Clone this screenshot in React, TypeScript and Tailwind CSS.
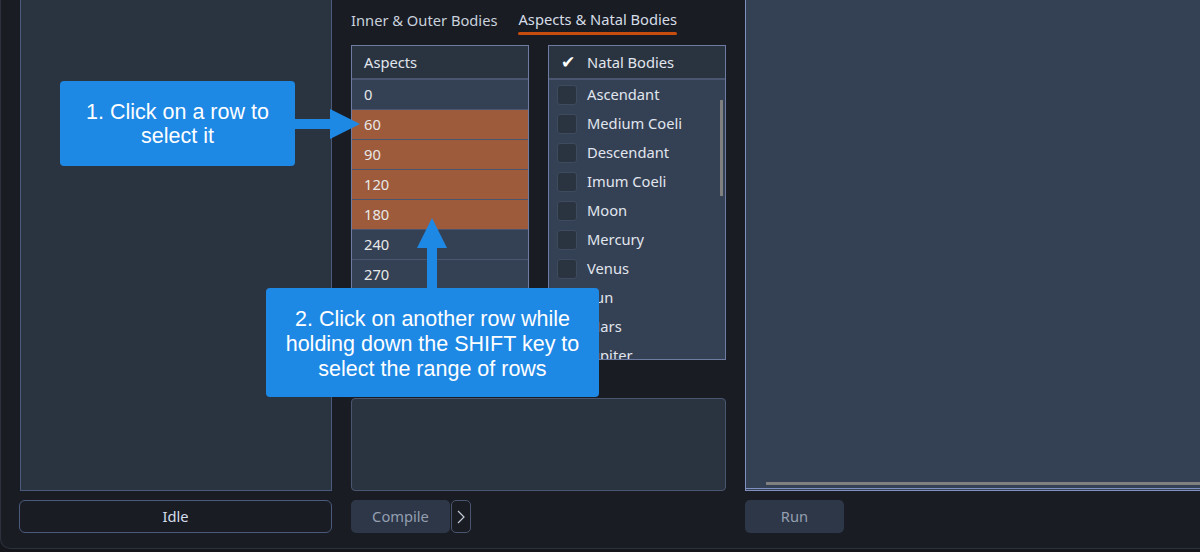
import React from "react";

const aspects = ["0", "60", "90", "120", "180", "240", "270", "300", "330", "360"];
const selectedAspects = ["60", "90", "120", "180"];

const natalBodies = [
  "Ascendant",
  "Medium Coeli",
  "Descendant",
  "Imum Coeli",
  "Moon",
  "Mercury",
  "Venus",
  "Sun",
  "Mars",
  "Jupiter",
];

const uiFont = { fontFamily: '"Noto Sans", "Open Sans", sans-serif' };
const calloutFont = { fontFamily: '"Liberation Sans", Arial, sans-serif' };

function RightArrow() {
  return (
    <svg width="66" height="30" viewBox="0 0 66 30" className="block">
      <rect x="0" y="10" width="36" height="10" fill="#1e88e5" />
      <polygon points="35,0 65,15 35,30" fill="#1e88e5" />
    </svg>
  );
}

function UpArrow() {
  return (
    <svg width="30" height="71" viewBox="0 0 30 71" className="block">
      <polygon points="15,0 30,30 0,30" fill="#1e88e5" />
      <rect x="10" y="29" width="10" height="42" fill="#1e88e5" />
    </svg>
  );
}

export default function App() {
  return (
    <div className="relative w-[1200px] h-[552px] overflow-hidden bg-[#14161c]" style={uiFont}>
      <div className="h-[549px] bg-[#191c23] border-l border-b border-[#2c313b] rounded-bl-[10px] flex pl-[18px] gap-[19px]">
        {/* Left column: status panel */}
        <div className="w-[313px] shrink-0 flex flex-col">
          <div className="h-[491px] ml-px bg-[#2a3441] border border-t-0 border-[#4a5a7a]" />
          <button className="mt-[9px] h-[33px] w-full rounded-[6px] border border-[#4a5a7a] text-[14.7px] text-[#d4dceb]">
            Idle
          </button>
        </div>

        {/* Middle column: tabs, tables, console */}
        <div className="w-[375px] shrink-0 flex flex-col">
          <div className="h-[45px] flex gap-[21px] text-[14.7px]">
            <div className="pt-[9px] text-[#c9d1dc]">Inner &amp; Outer Bodies</div>
            <div className="pt-[9px] text-[#d6dde7]">
              <div className="leading-[21px]">Aspects &amp; Natal Bodies</div>
              <div className="mt-[2px] h-[3px] rounded-full bg-[#c64d0e]" />
            </div>
          </div>

          <div className="flex gap-[19px] h-[315px]">
            {/* Aspects table */}
            <div className="w-[178px] border border-[#6e7ca3] bg-[#344054] flex flex-col overflow-hidden">
              <div className="h-[34px] shrink-0 bg-[#2a3441] border-b-2 border-[#4a5570] pl-[12px] flex items-center text-[14.7px] text-[#e1e6ee]">
                Aspects
              </div>
              {aspects.map((a) => (
                <div
                  key={a}
                  className={
                    "h-[30px] shrink-0 border-b border-[#4a5570] pl-[12px] flex items-center text-[14.7px] text-[#e8e8e8] " +
                    (selectedAspects.includes(a) ? "bg-[#9e5b3b]" : "bg-[#344054]")
                  }
                >
                  {a}
                </div>
              ))}
            </div>

            {/* Natal bodies checklist */}
            <div className="w-[178px] border border-[#6e7ca3] bg-[#344054] flex flex-col overflow-hidden">
              <div className="h-[34px] shrink-0 bg-[#2a3441] border-b-2 border-[#4a5570] pl-[12px] flex items-center gap-[13px] text-[14.7px] text-[#e1e6ee]">
                <span className="w-[13px] text-[17px] leading-none text-white" style={{ fontFamily: '"DejaVu Sans", sans-serif' }}>
                  ✔
                </span>
                Natal Bodies
              </div>
              <div className="relative flex-1 overflow-hidden">
                {natalBodies.map((b) => (
                  <div key={b} className="h-[29px] shrink-0 flex items-center pl-[8px] gap-[10px] text-[14.7px] text-[#e1e6ee]">
                    <span className="w-[20px] h-[20px] shrink-0 rounded-[3px] bg-[#2a3441] border border-[#3e4a5e]" />
                    {b}
                  </div>
                ))}
                <div className="absolute right-[2px] top-[20px] w-[3px] h-[96px] bg-[#808080]" />
              </div>
            </div>
          </div>

          <div className="mt-[38px] h-[93px] rounded-[4px] bg-[#2a3441] border border-[#4a5570]" />

          <div className="mt-[9px] flex gap-px">
            <button className="h-[33px] w-[99px] rounded-[5px] bg-[#2e3748] text-[14.7px] text-[#949fb0]">Compile</button>
            <button className="h-[33px] w-[20px] rounded-[5px] border border-[#4a5570] flex items-center justify-center">
              <svg width="8" height="14" viewBox="0 0 8 14">
                <polyline points="1,1 7,7 1,13" fill="none" stroke="#c4ccd8" strokeWidth="1.2" />
              </svg>
            </button>
          </div>
        </div>

        {/* Right column: output view */}
        <div className="flex-1 flex flex-col">
          <div className="h-[491px] bg-[#344054] border-l border-[#8090c0] flex flex-col justify-end">
            <div className="ml-[20px] h-[3px] bg-[#808080]" />
            <div className="mt-[3px] h-px bg-[#8090c0]" />
            <div className="h-px bg-[#344054]" />
            <div className="h-px bg-[#8090c0]" />
          </div>
          <button className="mt-[9px] h-[33px] w-[99px] rounded-[5px] bg-[#2e3748] text-[14.7px] text-[#949fb0]">Run</button>
        </div>
      </div>

      {/* Help callouts */}
      <div
        className="absolute left-[60px] top-[81px] w-[235px] h-[85px] rounded-[4px] bg-[#1e88e5] flex items-center justify-center text-center text-[21.5px] leading-[24px] text-white"
        style={calloutFont}
      >
        1. Click on a row to
        <br />
        select it
      </div>
      <div className="absolute left-[295px] top-[109px]">
        <RightArrow />
      </div>

      <div className="absolute left-[417px] top-[218px]">
        <UpArrow />
      </div>
      <div
        className="absolute left-[266px] top-[288px] w-[333px] h-[109px] pt-[4px] rounded-[4px] bg-[#1e88e5] flex items-center justify-center text-center text-[21.5px] leading-[25px] text-white"
        style={calloutFont}
      >
        2. Click on another row while
        <br />
        holding down the SHIFT key to
        <br />
        select the range of rows
      </div>
    </div>
  );
}
